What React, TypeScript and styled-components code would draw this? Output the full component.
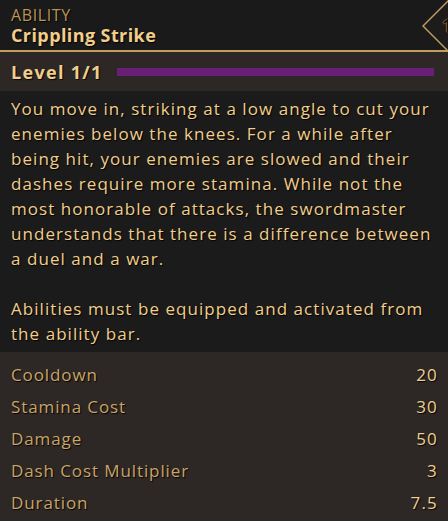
import { type FC } from 'react';
import styled, { createGlobalStyle } from 'styled-components';

const GlobalStyle = createGlobalStyle`
  html, body {
    margin: 0;
    padding: 0;
    background: #1c1b1b;
  }
  body {
    font-family: 'Open Sans', 'Liberation Sans', sans-serif;
    letter-spacing: 0.6px;
  }
`;

const Panel = styled.div`
  position: relative;
  width: 448px;
  height: 521px;
  overflow: hidden;
  display: flex;
  flex-direction: column;
  background: #1c1b1b;
  text-shadow: 1px 1px 1px rgba(0, 0, 0, 0.9);
`;

const Header = styled.header`
  height: 52px;
  box-sizing: border-box;
  padding: 5px 11px 0;
  border-bottom: 2px solid #c19d5f;
  background: #1b1a1a;
`;

const Kind = styled.div`
  font-size: 16px;
  line-height: 20px;
  color: #b8955a;
  text-transform: uppercase;
`;

const Title = styled.h1`
  margin: 0;
  font-size: 18px;
  line-height: 20px;
  font-weight: 700;
  letter-spacing: 0.4px;
  color: #f1ce8b;
`;

const Badge = styled.div`
  position: absolute;
  top: 0;
  left: 422px;
  width: 52px;
  height: 52px;
  clip-path: polygon(0 50%, 50% 0, 100% 50%, 50% 100%);
  background: #c19d5f;

  &::after {
    content: '';
    position: absolute;
    inset: 2px;
    clip-path: polygon(0 50%, 50% 0, 100% 50%, 50% 100%);
    background: #1e1c1b;
  }
`;

const BadgeNum = styled.span`
  position: absolute;
  z-index: 1;
  left: 20px;
  top: 13px;
  font-size: 18px;
  font-weight: 700;
  letter-spacing: 0;
  color: #111;
  text-shadow: 0 0 1px #c19d5f, 0 0 1px #c19d5f;
`;

const LevelRow = styled.div`
  height: 39px;
  display: flex;
  align-items: center;
  gap: 14px;
  padding: 0 14px 0 11px;
  background: #2d2826;
`;

const LevelLabel = styled.span`
  font-size: 18px;
  font-weight: 700;
  letter-spacing: 1.3px;
  color: #f1ce8b;
  white-space: nowrap;
`;

const Bar = styled.div`
  flex: 1;
  height: 8px;
  background: #6a1e76;
`;

const Description = styled.section`
  flex: 1;
  padding: 5px 5px 0 11px;
  font-size: 17px;
  line-height: 25px;
  letter-spacing: 1.05px;
  color: #f0ce8b;
`;

const Para = styled.p`
  margin: 0 0 25px;
  &:last-child {
    margin-bottom: 0;
  }
`;

const Stats = styled.section`
  height: 169px;
  box-sizing: border-box;
  padding: 6px 11px 0;
  background: #2d2826;
`;

const StatRow = styled.div`
  display: flex;
  justify-content: space-between;
  height: 32px;
  align-items: center;
  font-size: 17px;
  letter-spacing: 0.9px;
`;

const StatName = styled.span`
  color: #c9a466;
`;

const StatValue = styled.span`
  color: #f0d08f;
  letter-spacing: 1.2px;
  margin-right: -1px;
`;

const stats: [string, string][] = [
  ['Cooldown', '20'],
  ['Stamina Cost', '30'],
  ['Damage', '50'],
  ['Dash Cost Multiplier', '3'],
  ['Duration', '7.5'],
];

const App: FC = () => {
  return (
    <>
      <GlobalStyle />
      <Panel>
        <Header>
          <Kind>Ability</Kind>
          <Title>Crippling Strike</Title>
        </Header>
        <Badge>
          <BadgeNum>1</BadgeNum>
        </Badge>
        <LevelRow>
          <LevelLabel>Level 1/1</LevelLabel>
          <Bar />
        </LevelRow>
        <Description>
          <Para>
            You move in, striking at a low angle to cut your enemies below the
            knees. For a while after being hit, your enemies are slowed and
            their dashes require more stamina. While not the most honorable of
            attacks, the swordmaster understands that there is a difference
            between a duel and a war.
          </Para>
          <Para>
            Abilities must be equipped and activated from the ability bar.
          </Para>
        </Description>
        <Stats>
          {stats.map(([name, value]) => (
            <StatRow key={name}>
              <StatName>{name}</StatName>
              <StatValue>{value}</StatValue>
            </StatRow>
          ))}
        </Stats>
      </Panel>
    </>
  );
};

export default App;
